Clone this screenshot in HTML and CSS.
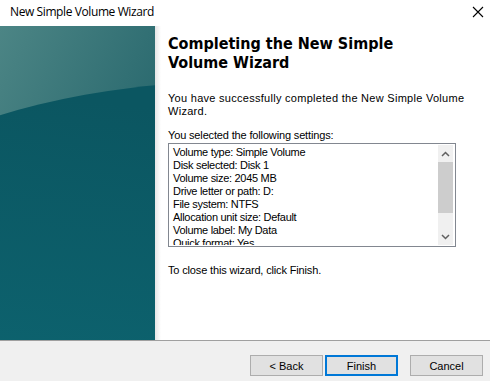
FILE: index.html
```html
<!DOCTYPE html>
<html lang="en">
<head>
    <meta charset="UTF-8">
    <title>New Simple Volume Wizard</title>
    <link rel="stylesheet" href="styles.css">
</head>
<body>
    <div class="titlebar">
        <span class="title">New Simple Volume Wizard</span>
        <svg class="close" width="12" height="12" viewBox="0 0 12 12">
            <path d="M1 1 L11 11 M11 1 L1 11" stroke="#000" stroke-width="1.1" fill="none"/>
        </svg>
    </div>

    <div class="main">
        <div class="banner">
            <svg width="155" height="314" viewBox="0 0 155 314">
                <defs>
                    <linearGradient id="top" x1="0" y1="0" x2="1" y2="1">
                        <stop offset="0" stop-color="#4c8585"/>
                        <stop offset="0.6" stop-color="#2c6b70"/>
                        <stop offset="1" stop-color="#1d5d66"/>
                    </linearGradient>
                    <linearGradient id="low" x1="0.2" y1="0" x2="0" y2="1">
                        <stop offset="0" stop-color="#0b5661"/>
                        <stop offset="0.5" stop-color="#0d6470"/>
                        <stop offset="1" stop-color="#107079"/>
                    </linearGradient>
                </defs>
                <rect width="155" height="314" fill="url(#top)"/>
                <ellipse cx="230" cy="353" rx="500" ry="297" fill="url(#low)"/>
            </svg>
        </div>
        <div class="shade"></div>
        <div class="content">
            <h1>Completing the New Simple Volume Wizard</h1>
            <p class="intro">You have successfully completed the New Simple Volume Wizard.</p>
            <p class="label">You selected the following settings:</p>
            <div class="listbox">
                <div class="items">
                    <div>Volume type: Simple Volume</div>
                    <div>Disk selected: Disk 1</div>
                    <div>Volume size: 2045 MB</div>
                    <div>Drive letter or path: D:</div>
                    <div>File system: NTFS</div>
                    <div>Allocation unit size: Default</div>
                    <div>Volume label: My Data</div>
                    <div>Quick format: Yes</div>
                </div>
                <div class="scrollbar">
                    <div class="arrow">
                        <svg width="9" height="6" viewBox="0 0 9 6"><path d="M1 5 L4.5 1.5 L8 5" stroke="#606060" stroke-width="1.5" fill="none"/></svg>
                    </div>
                    <div class="track"><div class="thumb"></div></div>
                    <div class="arrow">
                        <svg width="9" height="6" viewBox="0 0 9 6"><path d="M1 1 L4.5 4.5 L8 1" stroke="#606060" stroke-width="1.5" fill="none"/></svg>
                    </div>
                </div>
            </div>
            <p class="closing">To close this wizard, click Finish.</p>
        </div>
    </div>

    <div class="footer">
        <button class="back">&lt; Back</button>
        <button class="finish">Finish</button>
        <button class="cancel">Cancel</button>
    </div>
</body>
</html>
```

FILE: styles.css
```css
body {
    margin: 0;
    width: 490px;
    height: 381px;
    background-color: #fff;
    font-family: "Liberation Sans", Arial, sans-serif;
    font-size: 11px;
    color: #000;
    overflow: hidden;
}
.titlebar {
    height: 26px;
    display: flex;
    align-items: center;
    justify-content: space-between;
    padding: 0 6px 4px 10px;
    box-sizing: border-box;
}
.title {
    font-family: "Open Sans", "Noto Sans", sans-serif;
    font-size: 12px;
    letter-spacing: -0.4px;
}
.close {
    margin-top: 2px;
}
.main {
    display: flex;
    height: 314px;
}
.banner {
    width: 155px;
    height: 314px;
}
.banner svg {
    display: block;
}
.shade {
    width: 6px;
    background: linear-gradient(to right, #e6e6e6, #fff);
}
.content {
    flex: 1;
    padding: 8px 0 0 7px;
}
h1 {
    margin: 0;
    width: 260px;
    font-family: "DejaVu Sans Condensed", "DejaVu Sans", Verdana, sans-serif;
    font-size: 16px;
    line-height: 19px;
    font-weight: bold;
}
p {
    margin: 0;
    line-height: 13px;
}
.intro {
    margin-top: 20px;
    width: 300px;
    letter-spacing: 0.28px;
}
.label {
    margin-top: 11px;
    letter-spacing: -0.15px;
}
.listbox {
    margin-top: 1px;
    width: 288px;
    height: 104px;
    box-sizing: border-box;
    border: 1px solid #828790;
    padding: 1px 2px 1px 1px;
    display: flex;
}
.items {
    flex: 1;
    padding: 1px 0 0 3px;
    overflow: hidden;
    line-height: 13px;
    letter-spacing: -0.3px;
}
.scrollbar {
    width: 15px;
    background-color: #f0f0f0;
    display: flex;
    flex-direction: column;
}
.arrow {
    height: 17px;
    display: flex;
    align-items: center;
    justify-content: center;
}
.track {
    flex: 1;
}
.thumb {
    height: 51px;
    background-color: #cdcdcd;
}
.closing {
    margin-top: 17px;
    letter-spacing: -0.15px;
}
.footer {
    height: 41px;
    box-sizing: border-box;
    border-top: 1px solid #a0a0a0;
    background-color: #f0f0f0;
    display: flex;
    justify-content: flex-end;
    align-items: flex-start;
    padding: 14px 7px 0 0;
}
button {
    width: 73px;
    height: 21px;
    padding: 0;
    font-family: "Liberation Sans", Arial, sans-serif;
    font-size: 11px;
    color: #000;
    background-color: #e1e1e1;
    border: 1px solid #adadad;
    border-radius: 0;
}
.finish {
    margin-left: 2px;
    border: 2px solid #0078d7;
}
.cancel {
    margin-left: 12px;
}
```
